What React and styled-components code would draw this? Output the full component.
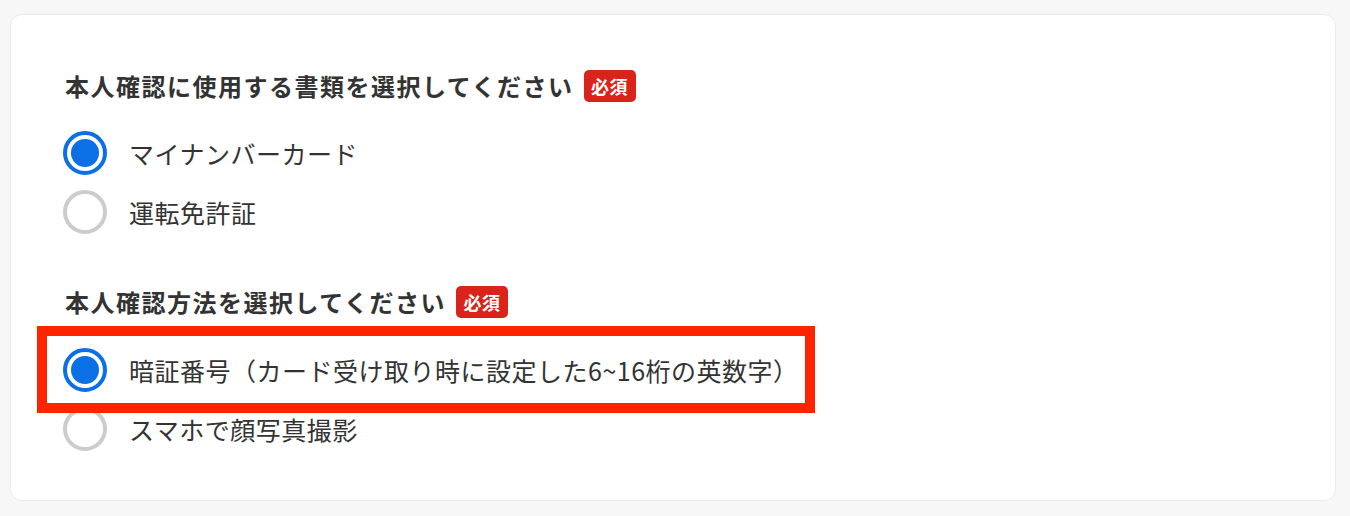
import React, { useState } from 'react';
import styled, { createGlobalStyle } from 'styled-components';

const GlobalStyle = createGlobalStyle`
  body {
    margin: 0;
    background: #f7f7f7;
    font-family: "Noto Sans CJK JP", "Noto Sans", sans-serif;
    color: #333;
  }
`;

const Page = styled.div`
  padding: 14px 14px 15px 10px;
`;

const Card = styled.div`
  background: #fff;
  border: 1px solid #ebebeb;
  border-radius: 12px;
  padding: 55px 52px 42px;
`;

const Section = styled.section`
  & + & {
    margin-top: 45px;
  }
`;

const HeadingRow = styled.div`
  display: flex;
  align-items: center;
  gap: 10px;
  height: 32px;
  padding-left: 2px;
  margin-bottom: ${p => p.$gap}px;
`;

const Heading = styled.h2`
  margin: 0;
  font-size: 24px;
  font-weight: 700;
  letter-spacing: 1.5px;
  line-height: 1;
  color: #333;
`;

const RequiredBadge = styled.span`
  display: inline-flex;
  align-items: center;
  justify-content: center;
  width: 52px;
  height: 32px;
  border-radius: 5px;
  background: #d9231b;
  color: #fff;
  font-size: 18px;
  font-weight: 700;
  letter-spacing: 0.5px;
`;

const Options = styled.div`
  display: flex;
  flex-direction: column;
`;

const OptionRow = styled.label`
  position: relative;
  display: flex;
  align-items: center;
  gap: 22px;
  height: 59px;
  cursor: pointer;
  z-index: ${p => (p.$highlight ? 1 : 0)};

  ${p =>
    p.$highlight &&
    `
    &::after {
      content: '';
      position: absolute;
      top: -14px;
      left: -26px;
      width: 778px;
      height: 87px;
      box-sizing: border-box;
      border: 10px solid #ff2400;
      pointer-events: none;
    }
  `}
`;

const RadioCircle = styled.span`
  flex: none;
  width: 44px;
  height: 44px;
  box-sizing: border-box;
  border-radius: 50%;
  border: 4px solid ${p => (p.$checked ? '#0b6fe6' : '#cccccc')};
  display: flex;
  align-items: center;
  justify-content: center;

  &::before {
    content: '';
    width: 28px;
    height: 28px;
    border-radius: 50%;
    background: ${p => (p.$checked ? '#0b6fe6' : 'transparent')};
  }
`;

const HiddenInput = styled.input`
  position: absolute;
  opacity: 0;
  pointer-events: none;
`;

const OptionText = styled.span`
  font-size: 25px;
  letter-spacing: 0.5px;
  color: #333;
`;

const sections = [
  {
    name: 'document',
    title: '本人確認に使用する書類を選択してください',
    gap: 21,
    options: ['マイナンバーカード', '運転免許証'],
  },
  {
    name: 'method',
    title: '本人確認方法を選択してください',
    gap: 22,
    options: ['暗証番号（カード受け取り時に設定した6~16桁の英数字）', 'スマホで顔写真撮影'],
    highlight: 0,
  },
];

function RadioGroup({ section }) {
  const [value, setValue] = useState(0);
  return (
    <Section>
      <HeadingRow $gap={section.gap}>
        <Heading>{section.title}</Heading>
        <RequiredBadge>必須</RequiredBadge>
      </HeadingRow>
      <Options>
        {section.options.map((label, i) => (
          <OptionRow key={label} $highlight={section.highlight === i}>
            <HiddenInput
              type="radio"
              name={section.name}
              checked={value === i}
              onChange={() => setValue(i)}
            />
            <RadioCircle $checked={value === i} />
            <OptionText>{label}</OptionText>
          </OptionRow>
        ))}
      </Options>
    </Section>
  );
}

export default function App() {
  return (
    <>
      <GlobalStyle />
      <Page>
        <Card>
          {sections.map(s => (
            <RadioGroup key={s.name} section={s} />
          ))}
        </Card>
      </Page>
    </>
  );
}
